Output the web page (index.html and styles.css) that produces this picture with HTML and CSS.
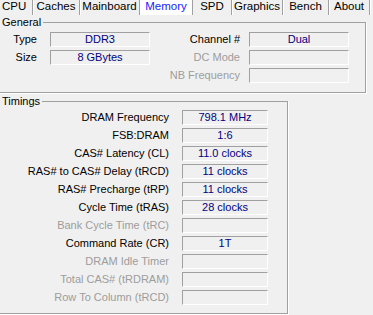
FILE: index.html
```html
<!DOCTYPE html>
<html>
<head>
<meta charset="utf-8">
<link rel="stylesheet" href="styles.css">
</head>
<body>
<div class="tabs">
  <div class="tab first">CPU</div>
  <div class="tab w47">Caches</div>
  <div class="tab w60">Mainboard</div>
  <div class="tab w53 selected">Memory</div>
  <div class="tab w39">SPD</div>
  <div class="tab w51">Graphics</div>
  <div class="tab w46">Bench</div>
  <div class="tab w41">About</div>
</div>

<fieldset class="group general">
  <legend>General</legend>
  <div class="ggrid">
    <div class="lbl l1">Type</div><div class="fld">DDR3</div>
    <div class="lbl l2">Channel #</div><div class="fld">Dual</div>
    <div class="lbl l1">Size</div><div class="fld">8 GBytes</div>
    <div class="lbl l2 dis">DC Mode</div><div class="fld"></div>
    <div class="lbl l1"></div><div class="empty"></div>
    <div class="lbl l2 dis">NB Frequency</div><div class="fld"></div>
  </div>
</fieldset>

<fieldset class="group timings">
  <legend>Timings</legend>
  <div class="tgrid">
    <div class="lbl">DRAM Frequency</div><div class="fld">798.1 MHz</div>
    <div class="lbl">FSB:DRAM</div><div class="fld">1:6</div>
    <div class="lbl">CAS# Latency (CL)</div><div class="fld">11.0 clocks</div>
    <div class="lbl">RAS# to CAS# Delay (tRCD)</div><div class="fld">11 clocks</div>
    <div class="lbl">RAS# Precharge (tRP)</div><div class="fld">11 clocks</div>
    <div class="lbl">Cycle Time (tRAS)</div><div class="fld">28 clocks</div>
    <div class="lbl dis">Bank Cycle Time (tRC)</div><div class="fld"></div>
    <div class="lbl">Command Rate (CR)</div><div class="fld">1T</div>
    <div class="lbl dis">DRAM Idle Timer</div><div class="fld"></div>
    <div class="lbl dis">Total CAS# (tRDRAM)</div><div class="fld"></div>
    <div class="lbl dis">Row To Column (tRCD)</div><div class="fld"></div>
  </div>
</fieldset>
</body>
</html>
```

FILE: styles.css
```css
html, body {
  margin: 0;
  padding: 0;
  background: #f0f0f0;
}
body {
  font-family: "Liberation Sans", Arial, sans-serif;
  font-size: 11px;
  color: #000;
  width: 373px;
  height: 315px;
  overflow: hidden;
}
.tabs {
  display: flex;
  height: 15px;
}
.tab {
  box-sizing: border-box;
  height: 15px;
  line-height: 13px;
  text-align: center;
  border-right: 1px solid #a0a0a0;
  box-shadow: 1px 0 0 #fff;
  white-space: nowrap;
  font-size: 11.5px;
}
.tab.first { width: 33px; text-align: left; padding-left: 2px; }
.w47 { width: 47px; }
.w60 { width: 60px; }
.w53 { width: 53px; }
.w39 { width: 39px; }
.w51 { width: 51px; }
.w46 { width: 46px; }
.w41 { width: 41px; }
.tab.selected {
  background: #fff;
  color: #1a1aff;
  box-shadow: none;
}

.group {
  box-sizing: border-box;
  margin: 0 0 0 -1px;
  padding: 0;
  border: 1px solid #a0a0a0;
  box-shadow: 1px 1px 0 #fff;
  min-width: 0;
}
.group legend {
  padding: 0 2px;
  margin-left: 0;
  line-height: 13px;
  height: 13px;
}
.general {
  width: 367px;
  margin-top: 1px;
  padding: 3px 0 9px 0;
}
.timings {
  width: 289px;
  margin-top: 2px;
  padding: 2px 0 8px 0;
}
.ggrid {
  display: grid;
  grid-template-columns: 50px 100px 99px 100px;
  grid-auto-rows: 15px;
  row-gap: 3px;
}
.tgrid {
  display: grid;
  grid-template-columns: 182px 86px;
  grid-auto-rows: 15px;
  row-gap: 3px;
}
.lbl {
  text-align: right;
  line-height: 15px;
  white-space: nowrap;
  padding-right: 13px;
}
.l2 { padding-right: 9px; }
.dis { color: #9d9d9d; }
.fld {
  box-sizing: border-box;
  border-top: 1px solid #a0a0a0;
  border-left: 1px solid #a0a0a0;
  border-right: 1px solid #fff;
  border-bottom: 1px solid #fff;
  color: #000080;
  text-align: center;
  line-height: 13px;
  white-space: nowrap;
}
```
